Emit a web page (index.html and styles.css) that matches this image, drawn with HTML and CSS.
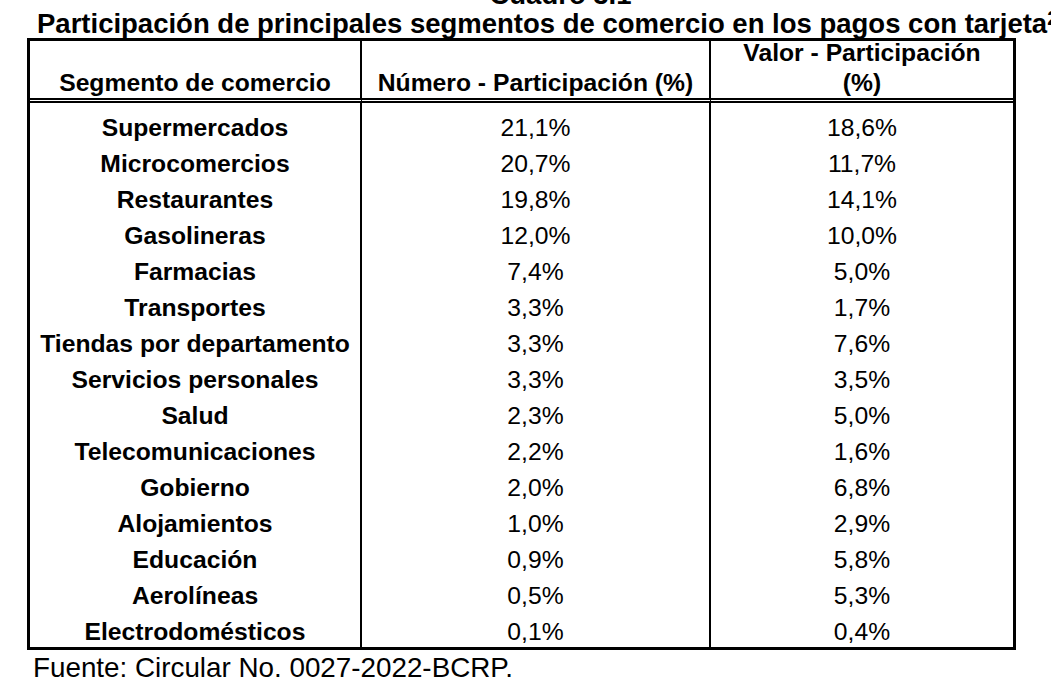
FILE: index.html
```html
<!DOCTYPE html>
<html lang="es">
<head>
<meta charset="utf-8">
<title>Cuadro 3.1</title>
<link rel="stylesheet" href="styles.css">
</head>
<body>
<div class="heading">
  <div class="cuadro">Cuadro 3.1</div>
  <div class="title">Participación de principales segmentos de comercio en los pagos con tarjeta<sup>2</sup></div>
</div>
<div class="grid">
  <div class="hcell c1">Segmento de comercio</div>
  <div class="hcell c2">Número - Participación (%)</div>
  <div class="hcell c3">Valor - Participación<br>(%)</div>

  <div class="cell c1 seg first">Supermercados</div><div class="cell c2 first">21,1%</div><div class="cell c3 first">18,6%</div>
  <div class="cell c1 seg">Microcomercios</div><div class="cell c2">20,7%</div><div class="cell c3">11,7%</div>
  <div class="cell c1 seg">Restaurantes</div><div class="cell c2">19,8%</div><div class="cell c3">14,1%</div>
  <div class="cell c1 seg">Gasolineras</div><div class="cell c2">12,0%</div><div class="cell c3">10,0%</div>
  <div class="cell c1 seg">Farmacias</div><div class="cell c2">7,4%</div><div class="cell c3">5,0%</div>
  <div class="cell c1 seg">Transportes</div><div class="cell c2">3,3%</div><div class="cell c3">1,7%</div>
  <div class="cell c1 seg">Tiendas por departamento</div><div class="cell c2">3,3%</div><div class="cell c3">7,6%</div>
  <div class="cell c1 seg">Servicios personales</div><div class="cell c2">3,3%</div><div class="cell c3">3,5%</div>
  <div class="cell c1 seg">Salud</div><div class="cell c2">2,3%</div><div class="cell c3">5,0%</div>
  <div class="cell c1 seg">Telecomunicaciones</div><div class="cell c2">2,2%</div><div class="cell c3">1,6%</div>
  <div class="cell c1 seg">Gobierno</div><div class="cell c2">2,0%</div><div class="cell c3">6,8%</div>
  <div class="cell c1 seg">Alojamientos</div><div class="cell c2">1,0%</div><div class="cell c3">2,9%</div>
  <div class="cell c1 seg">Educación</div><div class="cell c2">0,9%</div><div class="cell c3">5,8%</div>
  <div class="cell c1 seg">Aerolíneas</div><div class="cell c2">0,5%</div><div class="cell c3">5,3%</div>
  <div class="cell c1 seg last">Electrodomésticos</div><div class="cell c2 last">0,1%</div><div class="cell c3 last">0,4%</div>
</div>
<div class="source">Fuente: Circular No. 0027-2022-BCRP.</div>
</body>
</html>
```

FILE: styles.css
```css
html, body {
  margin: 0;
  padding: 0;
  background: #fff;
  color: #000;
  font-family: "Liberation Sans", Arial, sans-serif;
  overflow: hidden;
  width: 1051px;
  height: 686px;
}

.heading {
  margin-top: -20px;
  width: 1051px;
  font-weight: bold;
  font-size: 27.5px;
  white-space: nowrap;
}

.cuadro {
  line-height: 30px;
  text-align: center;
  padding-left: 70px;
}

.title {
  line-height: 28px;
  height: 28px;
  padding-left: 37px;
}

.title sup {
  font-size: 20px;
  line-height: 0;
  vertical-align: 8px;
}

.grid {
  display: grid;
  grid-template-columns: 332px 349px 302px;
  width: 989px;
  box-sizing: border-box;
  margin-left: 27px;
  border: 3px solid #000;
  font-size: 24.7px;
}

.c1, .c2 {
  border-right: 2px solid #000;
}

.hcell {
  box-sizing: border-box;
  height: 62px;
  border-bottom: 5px double #000;
  display: flex;
  flex-direction: column;
  justify-content: flex-end;
  text-align: center;
  font-weight: bold;
  line-height: 30px;
}

.cell {
  box-sizing: border-box;
  height: 36px;
  padding-top: 8px;
  line-height: 28px;
  text-align: center;
  white-space: nowrap;
}

.cell.first {
  height: 39px;
  padding-top: 11px;
}

.cell.last {
  height: 37px;
}

.seg {
  font-weight: bold;
}

.source {
  margin-top: 3px;
  padding-left: 33px;
  font-size: 27.8px;
  line-height: 30px;
  white-space: nowrap;
}
```
